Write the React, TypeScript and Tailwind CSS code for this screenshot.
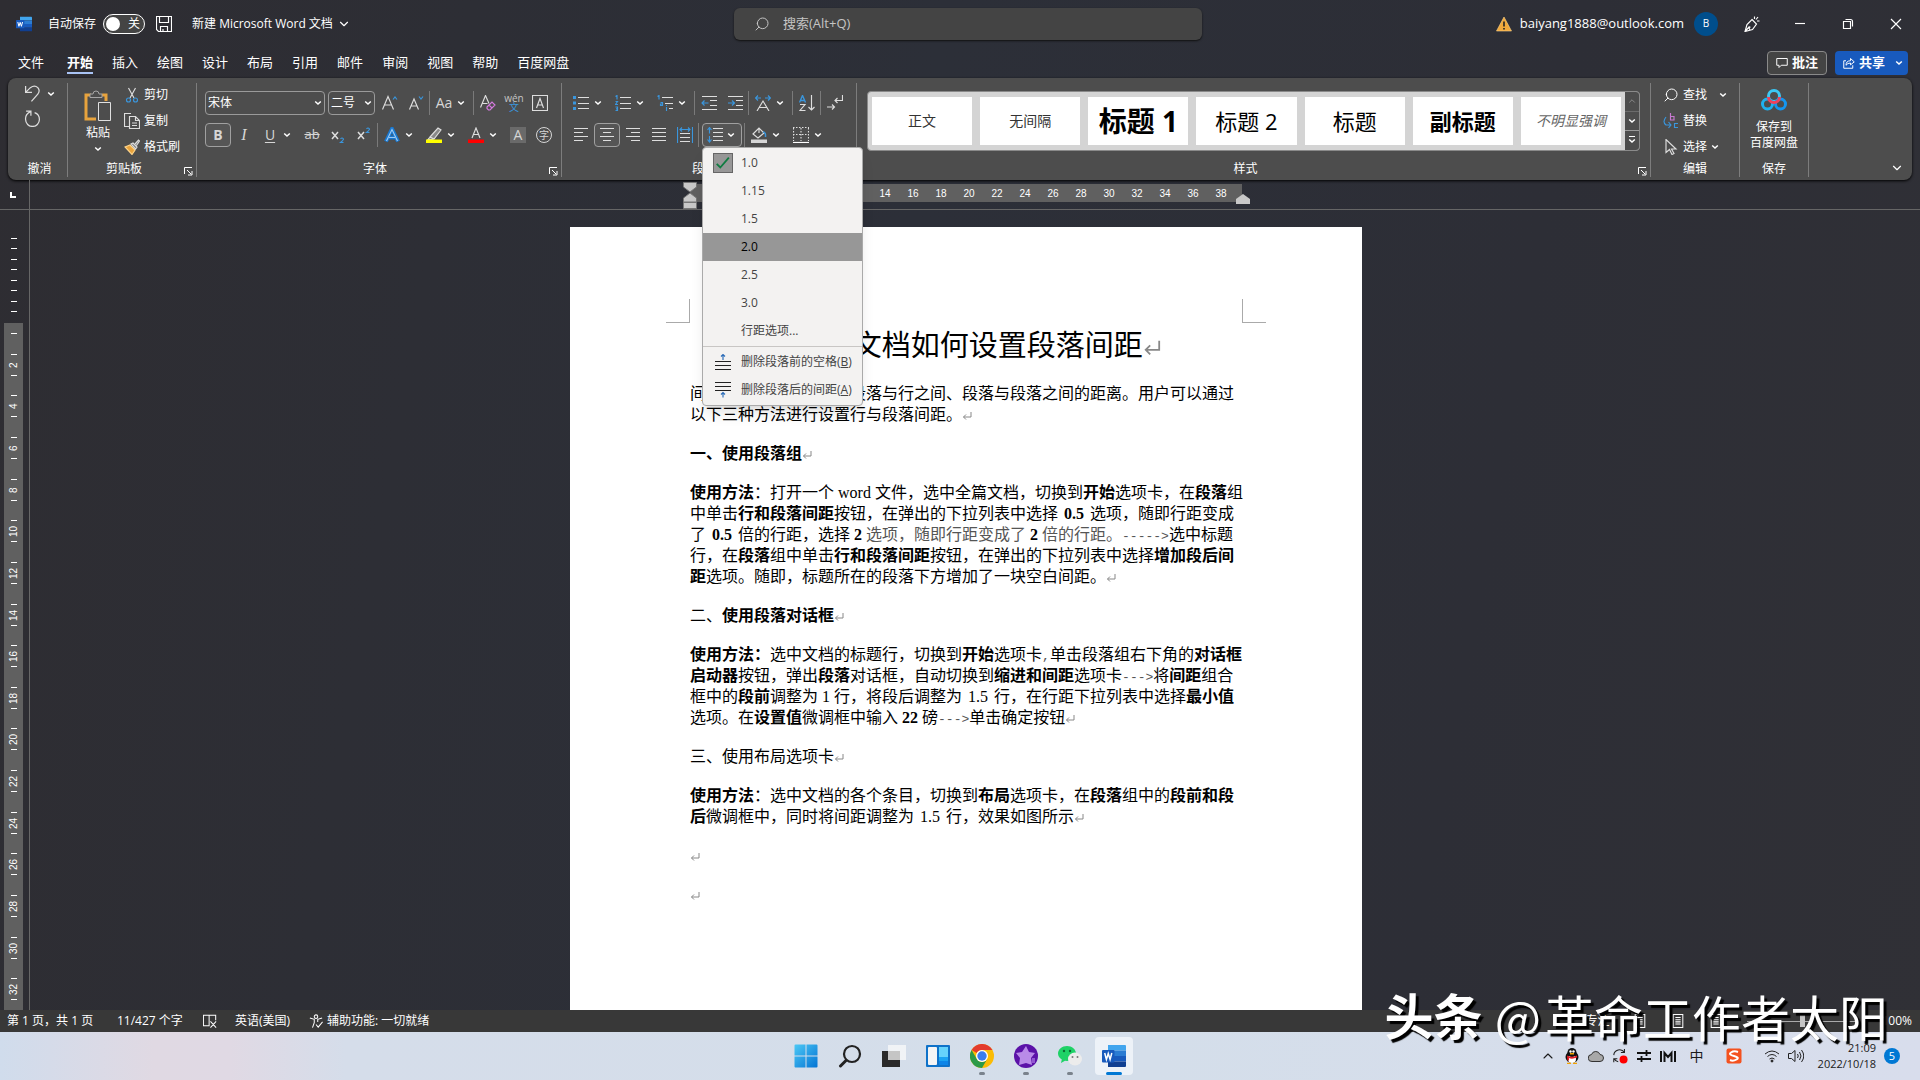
import type { ReactNode } from "react";
import { Search, ChevronDown, ChevronUp } from "lucide-react";

const TABS = ["文件", "开始", "插入", "绘图", "设计", "布局", "引用", "邮件", "审阅", "视图", "帮助", "百度网盘"];

const STYLES = [
  { name: "正文", cls: "text-sm text-[#333]" },
  { name: "无间隔", cls: "text-sm text-[#333]" },
  { name: "标题 1", cls: "text-[28px] font-bold text-black" },
  { name: "标题 2", cls: "text-[22px] text-black" },
  { name: "标题", cls: "text-[22px] text-black" },
  { name: "副标题", cls: "text-[22px] font-bold text-black" },
  { name: "不明显强调", cls: "text-sm italic text-[#666]" },
];

const SPACINGS = ["1.0", "1.15", "1.5", "2.0", "2.5", "3.0", "行距选项..."];

// * toggles bold, ~ toggles the lighter ink
const PARAGRAPHS = [
  ["间距就是指文档中文字段落与行之间、段落与段落之间的距离。用户可以通过", "以下三种方法进行设置行与段落间距。"],
  ["*一、使用段落组*"],
  [
    "*使用方法*：打开一个word文件，选中全篇文档，切换到*开始*选项卡，在*段落*组",
    "中单击*行和段落间距*按钮，在弹出的下拉列表中选择*0.5*选项，随即行距变成",
    "了*0.5*倍的行距，选择*2*~选项，随即行距变成了~*2*~倍的行距。~----->选中标题",
    "行，在*段落*组中单击*行和段落间距*按钮，在弹出的下拉列表中选择*增加段后间*",
    "*距*选项。随即，标题所在的段落下方增加了一块空白间距。",
  ],
  ["二、*使用段落对话框*"],
  [
    "*使用方法：*选中文档的标题行，切换到*开始*选项卡,单击段落组右下角的*对话框*",
    "*启动器*按钮，弹出*段落*对话框，自动切换到*缩进和间距*选项卡--->将*间距*组合",
    "框中的*段前*调整为1行，将段后调整为1.5行，在行距下拉列表中选择*最小值*",
    "选项。在*设置值*微调框中输入*22*磅--->单击确定按钮",
  ],
  ["三、使用布局选项卡"],
  [
    "*使用方法*：选中文档的各个条目，切换到*布局*选项卡，在*段落*组中的*段前和段*",
    "*后*微调框中，同时将间距调整为1.5行，效果如图所示",
  ],
  [""],
  [""],
];

function Rich({ text }: { text: string }) {
  let bold = false;
  let light = false;
  const out: ReactNode[] = [];
  text.split(/([*~]|[0-9A-Za-z.]+|[->,]+)/).forEach((part, i) => {
    if (part === "*") bold = !bold;
    else if (part === "~") light = !light;
    else if (part) {
      const word = /^[0-9A-Za-z.]+$/.test(part);
      const sign = /^[->,]+$/.test(part);
      const pad = part.includes(".") ? "px-1.5" : "px-1";
      out.push(
        <span
          key={i}
          className={`${bold ? "font-bold" : ""} ${light || sign ? "text-[#555]" : ""} ${
            sign ? "font-['Liberation_Mono',monospace] text-[13px]" : ""
          } ${word ? `font-['Liberation_Serif',serif] ${pad}` : ""}`}
        >
          {part}
        </span>
      );
    }
  });
  return <>{out}</>;
}

function ReturnMark({ large }: { large?: boolean }) {
  return (
    <svg
      viewBox="0 0 10 10"
      className={`inline ${large ? "size-[18px]" : "size-[10px]"}`}
      fill="none"
      stroke="#888"
    >
      <path d="M9 1v5H1.5M4 3.5 1.5 6 4 8.5" />
    </svg>
  );
}

/* ---------- small building blocks ---------- */

function Ico({ children, className = "size-4" }: { children: ReactNode; className?: string }) {
  return (
    <svg viewBox="0 0 16 16" className={`shrink-0 ${className}`} fill="none" stroke="#dedede" strokeWidth="1.15">
      {children}
    </svg>
  );
}

function Chev() {
  return (
    <svg viewBox="0 0 8 8" className="size-2 shrink-0" fill="none" stroke="#fff" strokeWidth="1.5">
      <path d="M1.2 2.500 4 5l2.800-2.500" />
    </svg>
  );
}

function Tool({ label, on, children }: { label: string; on?: boolean; children: ReactNode }) {
  return (
    <button
      aria-label={label}
      className={`flex h-6 w-[26px] shrink-0 items-center justify-center rounded ${
        on ? "border border-[#a0a0a0] bg-[#555]" : ""
      }`}
    >
      {children}
    </button>
  );
}

function Split({ label, children }: { label: string; children: ReactNode }) {
  return (
    <button aria-label={label} className="flex h-6 w-[42px] shrink-0 items-center">
      <span className="flex w-[26px] justify-center">{children}</span>
      <Chev />
    </button>
  );
}

function Sep() {
  return <span className="mr-px h-6 w-px shrink-0 bg-[#7a7a7a]" />;
}

function Combo({ label, value, className }: { label: string; value: string; className: string }) {
  return (
    <span className={`grid items-center rounded border border-[#9a9a9a] ${className}`}>
      <select
        aria-label={label}
        className="col-start-1 row-start-1 h-[22px] w-full appearance-none bg-transparent pl-0.5 text-xs text-white outline-none"
      >
        <option>{value}</option>
      </select>
      <span className="pointer-events-none col-start-1 row-start-1 mr-0.5 justify-self-end">
        <Chev />
      </span>
    </span>
  );
}

function Group({
  title,
  className,
  launcher,
  children,
}: {
  title: string;
  className: string;
  launcher?: boolean;
  children: ReactNode;
}) {
  return (
    <section aria-label={title} className={`flex flex-col border-r border-[#7d7d7d] ${className}`}>
      <div className="min-h-0 flex-1">{children}</div>
      <div className="flex h-4 items-center text-xs leading-4">
        <span className="flex-1 text-center">{title}</span>
        {launcher && (
          <button aria-label={`${title}设置`} className="flex w-4 justify-center pt-1">
            <svg viewBox="0 0 9 9" className="size-[9px]" fill="none" stroke="#fff">
              <path d="M.5 7V.5H8M3 3l4 4M8 4v4H4" />
            </svg>
          </button>
        )}
      </div>
    </section>
  );
}

function WordLogo({ className }: { className: string }) {
  return (
    <svg viewBox="0 0 24 24" className={className}>
      <path d="M6 1h17a1 1 0 0 1 1 1v4.5H6z" fill="#41a5ee" />
      <path d="M6 6.500h18V12H6z" fill="#2b7cd3" />
      <path d="M6 12h18v5.500H6z" fill="#185abd" />
      <path d="M6 17.500h18V22a1 1 0 0 1-1 1H6z" fill="#103f91" />
      <rect y="6" width="12.500" height="12.500" rx="1" fill="#185abd" />
      <path d="m2.700 9 1.700 6.500L6.250 9.500l1.850 6L9.800 9" fill="none" stroke="#fff" strokeWidth="1.500" />
    </svg>
  );
}

/* ---------- title bar and tabs ---------- */

function TitleBar() {
  return (
    <header className="flex h-12 items-center text-xs">
      <div className="flex flex-1 items-center pl-4">
        <WordLogo className="size-4" />
        <label className="ml-4 flex items-center gap-[7px]">
          自动保存
          <input type="checkbox" role="switch" className="sr-only" />
          <span className="flex h-5 w-[42px] items-center justify-between rounded-full border border-white bg-[#444] pr-1 pl-0.5">
            <span className="size-[14px] rounded-full bg-white" />关
          </span>
        </label>
        <button aria-label="保存" className="ml-[11px]">
          <Ico>
            <path d="M.5.5h15v15h-13l-2-2zM3.500.5v6h9v-6M4.500 15.500v-5h7v5M7 13v2.500" stroke="#fff" />
          </Ico>
        </button>
        <button className="ml-5 flex items-center gap-1">
          新建 Microsoft Word 文档
          <ChevronDown className="size-3.5" />
        </button>
      </div>
      <label className="flex h-8 w-[468px] items-center gap-[13px] rounded-md bg-[#444] px-5 text-[#c4c4c4] shadow-[0_1px_2px_#111]">
        <Search className="size-4 shrink-0 -scale-x-100" strokeWidth={1.5} />
        <input
          aria-label="搜索"
          placeholder="搜索(Alt+Q)"
          className="w-full bg-transparent text-[13px] outline-none placeholder:text-[#c4c4c4]"
        />
      </label>
      <div className="flex flex-1 items-center justify-end">
        <svg viewBox="0 0 16 16" className="size-4">
          <path d="M8 1 15.500 15H.5z" fill="#f2a93b" stroke="#ffd58a" strokeWidth=".6" />
          <path d="M8 5.500v5M8 12v1.500" stroke="#222" strokeWidth="1.600" />
        </svg>
        <span className="ml-2 text-[13px]">baiyang1888@outlook.com</span>
        <span className="ml-2.5 flex size-6 items-center justify-center rounded-full bg-[#004e8c] text-[10px]">
          B
        </span>
        <button aria-label="即将推出的功能" className="ml-2.5 flex w-12 justify-center">
          <Ico>
            <path d="M8 3.500 12.500 8 8.500 13.500 1 15.500 3 8.500zM1 15.500 5.500 10.500M6.500 11a1.500 1.500 0 1 0 .5 3M10.500.5v2.500M14 1l-2 2.500M15.500 5h-2.500" stroke="#fff" />
          </Ico>
        </button>
        <button aria-label="最小化" className="flex w-12 justify-center">
          <Ico>
            <path d="M3 7.500h10" stroke="#fff" />
          </Ico>
        </button>
        <button aria-label="还原" className="flex w-12 justify-center">
          <Ico>
            <path d="M5.500 3.500h5q2 0 2 2v5M3.500 5.500h7v7h-7z" stroke="#fff" />
          </Ico>
        </button>
        <button aria-label="关闭" className="flex w-12 justify-center">
          <Ico>
            <path d="m3 3 10 10M13 3 3 13" stroke="#fff" />
          </Ico>
        </button>
      </div>
    </header>
  );
}

function TabRow() {
  return (
    <nav className="flex h-[30px] items-center pr-3 pl-[18px] text-[13px]">
      <div className="flex flex-1 gap-[19px]">
        {TABS.map((t, i) => (
          <button
            key={t}
            className={`border-b-2 leading-5 ${i === 0 ? "mr-1" : ""} ${
              i === 1 ? "border-[#a9c3f5] font-bold" : "border-transparent"
            }`}
          >
            {t}
          </button>
        ))}
      </div>
      <button className="mr-2 flex h-6 w-[60px] items-center justify-center gap-1 rounded border border-[#8a8a8a] bg-[#444] font-bold">
        <Ico className="size-3">
          <path d="M1 2h14v9H7l-3 3v-3H1z" stroke="#fff" strokeWidth="1.300" />
        </Ico>
        批注
      </button>
      <button className="flex h-6 w-[73px] items-center gap-1 rounded bg-[#185abd] pl-2 font-bold">
        <Ico className="size-3">
          <path d="M4 5H1v10h12v-4M10 2l5 4.500-5 4V8Q6 8 4 11q0-6 6-6z" stroke="#fff" strokeWidth="1.300" />
        </Ico>
        共享
        <span className="ml-1.5">
          <Chev />
        </span>
      </button>
    </nav>
  );
}

/* ---------- ribbon ---------- */

function ClipboardGroup() {
  return (
    <Group title="剪贴板" className="w-[129px]" launcher>
      <div className="flex pt-1 pl-3.5">
        <button className="flex w-8 flex-col items-center gap-1 pt-0.5 text-xs leading-4">
          <svg viewBox="0 0 28 32" className="h-8 w-7" fill="none">
            <path d="M7 6H2v24h10M18 6h4v6" stroke="#e8a33d" strokeWidth="3" />
            <path d="M6 8.500V5h3q0-3 3-3t3 3h3v3.500z" fill="#4d4d4d" stroke="#a6a6a6" />
            <path d="M14.500 13.500h12v18h-12z" fill="#4d4d4d" stroke="#e0e0e0" />
          </svg>
          粘贴
          <Chev />
        </button>
        <div className="ml-2.5 flex flex-col gap-2.5 text-xs leading-4">
          <button className="flex items-center gap-1">
            <Ico>
              <path d="M4.500 1 10 11M11.500 1 6 11" />
              <circle cx="4.500" cy="13" r="2" stroke="#3a96dd" />
              <circle cx="11.500" cy="13" r="2" stroke="#3a96dd" />
            </Ico>
            剪切
          </button>
          <button className="flex items-center gap-1">
            <Ico>
              <path d="M5 13.500H.5V.5H7M5.500 3.500h6l4 4v8h-10zM11.500 3.500v4h4M8 10h5M8 12.500h5" />
            </Ico>
            复制
          </button>
          <button className="flex items-center gap-1">
            <Ico>
              <path d="m1 8 5-2 5 5-3 4.500z" fill="#e8a33d" stroke="#ffd58a" />
              <path d="m7 5 2-1 4 4-1.500 2zM11 5l3.500-4 1 1L12.500 6.500" fill="#777" />
            </Ico>
            格式刷
          </button>
        </div>
      </div>
    </Group>
  );
}

function FontGroup() {
  return (
    <Group title="字体" className="w-[365px] pl-2" launcher>
      <div className="flex flex-col gap-2 pt-2">
        <div className="flex">
          <Combo label="字体" value="宋体" className="mr-[3px] w-[120px]" />
          <Combo label="字号" value="二号" className="mr-0.5 w-[47px]" />
          <Tool label="增大字号">
            <Ico>
              <path d="M.5 14.500 6 1.500l5.500 13M2.500 10h7" />
              <path d="m11 4.500 2-2.500 2 2.500" stroke="#3a96dd" />
            </Ico>
          </Tool>
          <Tool label="减小字号">
            <Ico>
              <path d="M1.500 14.500 6 4l4.500 10.500M3 11h6" />
              <path d="m11 1.500 2 2.500 2-2.500" stroke="#3a96dd" />
            </Ico>
          </Tool>
          <Sep />
          <Split label="更改大小写">
            <span className="text-sm text-[#d6d6d6]">Aa</span>
          </Split>
          <Sep />
          <Tool label="清除格式">
            <Ico>
              <path d="M.5 12.500 5.500.5l3.500 8M2.500 8.500h5" />
              <path d="m7 12 5-5 3 3-5 5H8.500L7 13.500zM9 10l3 3" stroke="#d67ae0" />
            </Ico>
          </Tool>
          <Tool label="拼音指南">
            <span className="flex flex-col items-center text-[10px] leading-[9px] text-[#c4c4c4]">
              wén<span className="text-[#3a96dd]">文</span>
            </span>
          </Tool>
          <Tool label="字符边框">
            <Ico>
              <path d="M.5.5h15v15H.5zM4.500 13 8 3.500 11.500 13M5.500 10h5" />
            </Ico>
          </Tool>
        </div>
        <div className="flex text-base text-[#d6d6d6]">
          <Tool label="加粗" on>
            <b className="text-sm">B</b>
          </Tool>
          <Tool label="倾斜">
            <i className="font-['Liberation_Serif',serif]">I</i>
          </Tool>
          <Split label="下划线">
            <span className="text-sm underline underline-offset-2">U</span>
          </Split>
          <Tool label="删除线">
            <span className="text-[13px] line-through">ab</span>
          </Tool>
          <Tool label="下标">
            <Ico>
              <path d="m2 5 6 7M8 5l-6 7" strokeWidth="1.500" />
              <path d="M10.500 12q1.500-2 3 0 0 1-3 3.500h3" stroke="#3a96dd" />
            </Ico>
          </Tool>
          <Tool label="上标">
            <Ico>
              <path d="m2 5 6 7M8 5l-6 7" strokeWidth="1.500" />
              <path d="M10.500 2q1.500-2 3 0 0 1-3 3.500h3" stroke="#3a96dd" />
            </Ico>
          </Tool>
          <Sep />
          <Split label="文本效果">
            <Ico>
              <path d="M2 14.500 8 2l6 12.500M5 10.500h6" stroke="#1a78d0" strokeWidth="4" />
              <path d="M2.500 14 8 2.500 13.500 14M5 10.500h6" stroke="#9ccbf5" />
            </Ico>
          </Split>
          <Split label="突出显示">
            <Ico>
              <path d="m4 10 8-9 3 2-7 9zM4 10l-2 2.500h4l2-.5" fill="#888" />
              <path d="M0 12.500h16V16H0z" fill="#ffff00" stroke="none" />
            </Ico>
          </Split>
          <Split label="字体颜色">
            <Ico>
              <path d="M4 11 8 1l4 10M5.500 7.500h5" />
              <path d="M0 12.500h16V16H0z" fill="#ff0000" stroke="none" />
            </Ico>
          </Split>
          <Tool label="字符底纹">
            <span className="flex size-4 items-center justify-center bg-[#6a6a6a] text-sm">A</span>
          </Tool>
          <Tool label="带圈字符">
            <span className="flex size-4 items-center justify-center rounded-full border border-[#d6d6d6] text-[10px]">
              字
            </span>
          </Tool>
        </div>
      </div>
    </Group>
  );
}

function SpacingMenu() {
  return (
    <div
      role="menu"
      className="absolute top-full left-0 z-20 w-[161px] rounded border border-[#aaa] bg-[#f3f2f1] py-px text-xs text-[#444] shadow-lg"
    >
      {SPACINGS.map((s) => (
        <button
          key={s}
          role="menuitem"
          className={`flex h-7 w-full items-center pl-2.5 ${s === "2.0" ? "bg-[#979797] text-black" : ""}`}
        >
          <span className="mr-2 flex w-5 justify-center">
            {s === "1.0" && (
              <svg viewBox="0 0 20 20" className="size-5 border border-[#666] bg-[#979797]">
                <path d="m3 11 4 4 9.500-11" fill="none" stroke="#107c41" strokeWidth="2" />
              </svg>
            )}
          </span>
          {s}
        </button>
      ))}
      <hr className="my-px border-[#c8c6c4]" />
      <button role="menuitem" className="flex h-7 w-full items-center pl-2.5 whitespace-nowrap">
        <Ico className="mr-2.5 ml-0.5 size-4">
          <path d="M0 7.500h16M0 11.500h16M0 15.500h16" stroke="#222" />
          <path d="M8 6V.5M6 2.500l2-2 2 2" stroke="#2b6cb8" />
        </Ico>
        删除段落前的空格(<u>B</u>)
      </button>
      <button role="menuitem" className="flex h-7 w-full items-center pl-2.5 whitespace-nowrap">
        <Ico className="mr-2.5 ml-0.5 size-4">
          <path d="M0 .5h16M0 4.500h16M0 8.500h16" stroke="#222" />
          <path d="M8 10v5.500M6 12.500l2-2 2 2" stroke="#2b6cb8" />
        </Ico>
        删除段落后的间距(<u>A</u>)
      </button>
    </div>
  );
}

function ParagraphGroup() {
  return (
    <Group title="段落" className="w-[295px] pl-1.5" launcher>
      <div className="flex flex-col gap-2 pt-2">
        <div className="flex">
          <Split label="项目符号">
            <Ico>
              <path d="M0 1h3v3H0zM0 6.500h3v3H0zM0 12h3v3H0z" fill="#3a96dd" stroke="none" />
              <path d="M5 2.500h11M5 8.500h11M5 13.500h11" />
            </Ico>
          </Split>
          <Split label="编号">
            <Ico>
              <path d="M.5 1.500 2 .5v4M.5 6.500H2.500l-2 3h2.500M.5 12h2v3.500h-2M1 13.800h1.500" stroke="#3a96dd" />
              <path d="M5 2.500h11M5 8.500h11M5 13.500h11" />
            </Ico>
          </Split>
          <Split label="多级列表">
            <Ico>
              <path d="M.5 1.500 2 .5v4M3.500 7.500h2v3h-2v-1.500h2M9.500 12v4M9.500 10v1" stroke="#3a96dd" />
              <path d="M5 2.500h11M8 8.500h8M12 13.500h4" />
            </Ico>
          </Split>
          <Sep />
          <Tool label="减少缩进量">
            <Ico>
              <path d="M1 1.500h15M9 5.500h7M9 10.500h7M1 14.500h15" />
              <path d="M7.500 8H1M3.500 5.500 1 8l2.500 2.500" stroke="#3a96dd" />
            </Ico>
          </Tool>
          <Tool label="增加缩进量">
            <Ico>
              <path d="M1 1.500h15M9 5.500h7M9 10.500h7M1 14.500h15" />
              <path d="M1 8h6.500M5 5.500 7.500 8 5 10.500" stroke="#3a96dd" />
            </Ico>
          </Tool>
          <Sep />
          <Split label="中文版式">
            <Ico>
              <path d="M2 16 8 6l6 10M4 12.500h8" />
              <path d="M6 3H.5M3 .5.500 3 3 5.500M10 3h5.500M13 .5 15.500 3 13 5.500" stroke="#3a96dd" />
            </Ico>
          </Split>
          <Sep />
          <Tool label="排序">
            <Ico>
              <path d="M.5 7.500 3.500.5l3 7M1.500 5.500h4" stroke="#3a96dd" strokeWidth="1.400" />
              <path d="M1 9.500h5l-5 6h5.500M12.500 0v15M9.500 12l3 3 3-3" />
            </Ico>
          </Tool>
          <Sep />
          <Tool label="显示编辑标记">
            <Ico>
              <path d="M15.500 0v5.500H8M10.500 3 8 5.500 10.500 8M0 12h7.500M5 9.500 7.500 12 5 14.500" />
            </Ico>
          </Tool>
        </div>
        <div className="flex">
          <Tool label="左对齐">
            <Ico>
              <path d="M1 1.500h14M1 5.500h9M1 9.500h14M1 13.500h9" />
            </Ico>
          </Tool>
          <Tool label="居中" on>
            <Ico>
              <path d="M1 1.500h14M4 5.500h8M1 9.500h14M4 13.500h8" />
            </Ico>
          </Tool>
          <Tool label="右对齐">
            <Ico>
              <path d="M1 1.500h14M6 5.500h9M1 9.500h14M6 13.500h9" />
            </Ico>
          </Tool>
          <Tool label="两端对齐">
            <Ico>
              <path d="M1 1.500h14M1 5.500h14M1 9.500h14M1 13.500h14" />
            </Ico>
          </Tool>
          <Tool label="分散对齐">
            <Ico>
              <path d="M3 6.500h10M3 10.500h10M3 14.500h10" />
              <path d="M.5 0v16M15.500 0v16M2.500 2.500h11M5 .5l-2 2 2 2M11 .5l2 2-2 2" stroke="#3a96dd" />
            </Ico>
          </Tool>
          <Sep />
          <div className="relative mr-0.5 ml-0.5">
            <button
              aria-label="行和段落间距"
              className="flex h-6 w-10 items-center gap-1 rounded border border-[#a0a0a0] bg-[#555] pl-1"
            >
              <Ico>
                <path d="M6 1.500h10M6 5.500h10M6 9.500h10M6 13.500h10" />
                <path d="M2.500.5v6M.5 3l2-2.500 2 2.500M2.500 9v6M.5 12.500l2 2.500 2-2.500" stroke="#3a96dd" />
              </Ico>
              <Chev />
            </button>
            <SpacingMenu />
          </div>
          <Sep />
          <Split label="底纹">
            <Ico>
              <path d="m2 7 6-6 5 5-6 5zM8 1v5" />
              <path d="M12 5q3 0 2.500 5" stroke="#3a96dd" strokeWidth="1.500" />
              <path d="M0 12.500h16V16H0z" fill="#d6d6d6" stroke="none" />
            </Ico>
          </Split>
          <Split label="边框">
            <Ico>
              <path d="M.5 1v13M15.500 1v13M8 1v13M0 .5h16M0 7.500h16" strokeDasharray="1.500 1.500" />
              <path d="M0 15.500h16" stroke="#fff" />
            </Ico>
          </Split>
        </div>
      </div>
    </Group>
  );
}

function StylesGroup() {
  return (
    <Group title="样式" className="min-w-0 flex-1" launcher>
      <div className="mx-2.5 mt-2 flex h-[60px] overflow-hidden rounded border border-[#8a8a8a] bg-[#d4d4d4]">
        <div className="flex min-w-0 flex-1 gap-2 px-1 py-[5px]">
          {STYLES.map((s) => (
            <button key={s.name} className={`min-w-0 flex-1 overflow-hidden bg-white whitespace-nowrap ${s.cls}`}>
              {s.name}
            </button>
          ))}
        </div>
        <div className="flex w-[14px] flex-col divide-y divide-[#9a9a9a] bg-[#4d4d4d]">
          <button aria-label="上一行" className="flex flex-1 items-center justify-center opacity-40">
            <ChevronUp className="size-2.5" />
          </button>
          <button aria-label="下一行" className="flex flex-1 items-center justify-center">
            <Chev />
          </button>
          <button aria-label="其他" className="flex flex-1 flex-col items-center justify-center">
            <span className="h-px w-1.5 bg-white" />
            <Chev />
          </button>
        </div>
      </div>
    </Group>
  );
}

function Ribbon() {
  return (
    <div className="mx-2 flex h-[102px] rounded-lg bg-[#4d4d4d] pt-[5px] pb-[3px] shadow-[0_1px_3px_#000]">
      <Group title="撤消" className="w-[60px] pl-1">
        <div className="flex flex-col gap-2 pt-0.5 pl-3">
          <button aria-label="撤消" className="flex items-center gap-1.5">
            <Ico className="size-[17px]">
              <path d="M1.500 1v6h6M1.500 7 6 2.500q4-3 7 0 2.500 3 0 6L7 15.500" />
            </Ico>
            <Chev />
          </button>
          <button aria-label="重复">
            <Ico className="size-[17px]">
              <path d="M2 1h4.500v4.500M6 1.500Q1 4 1.500 9a6.500 6.500 0 0 0 13 0q0-5-4.500-6.500" />
            </Ico>
          </button>
        </div>
      </Group>
      <ClipboardGroup />
      <FontGroup />
      <ParagraphGroup />
      <StylesGroup />
      <Group title="编辑" className="w-[89px]">
        <div className="flex flex-col gap-2.5 pt-1 pl-3 text-xs leading-4">
          <button className="flex items-center gap-1">
            <Search className="size-4 -scale-x-100" strokeWidth={1.5} />
            查找
            <span className="ml-2">
              <Chev />
            </span>
          </button>
          <button className="flex items-center gap-1">
            <Ico>
              <path d="M7.500 0v7h3.500V3.500H7.500" stroke="#c77ad0" />
              <path d="M15 10.500h-3.500v4H15M3 4Q-1 9 3 12h5M5.500 9 8 12l-2.500 3" stroke="#3a96dd" />
            </Ico>
            替换
          </button>
          <button className="flex items-center gap-1">
            <Ico>
              <path d="M3 .5v13l3.500-3L9 15.500l2-1-2.500-4.500H13z" />
            </Ico>
            选择
            <Chev />
          </button>
        </div>
      </Group>
      <Group title="保存" className="w-[69px]">
        <button className="flex w-full flex-col items-center pt-1 text-xs leading-4">
          <svg viewBox="0 0 26 24" className="h-6 w-[26px]" fill="none" strokeWidth="3">
            <circle cx="13" cy="9" r="5.500" stroke="#3cc8f5" />
            <circle cx="6.500" cy="17" r="5" stroke="#1fb1f0" />
            <circle cx="19.500" cy="17" r="5" stroke="#1496f0" />
            <path d="M7.500 10a5.500 5.500 0 0 0 11 0" stroke="#f0405c" />
          </svg>
          <span className="mt-2">保存到</span>
          <span>百度网盘</span>
        </button>
      </Group>
      <div className="flex w-[103px] items-end justify-end pr-2 pb-0.5">
        <button aria-label="功能区显示选项">
          <ChevronDown className="size-[14px]" />
        </button>
      </div>
    </div>
  );
}

/* ---------- rulers and document ---------- */

function HorizontalRuler() {
  return (
    <div className="flex h-[30px] border-b border-[#666]">
      <div className="flex w-[30px] items-center justify-center border-r border-[#666] pr-1">
        <span className="size-1.5 border-b-2 border-l-2 border-white" />
      </div>
      <div className="flex flex-1 justify-center pt-1 pr-[18px]">
        <div className="relative flex h-[18px] w-[552px] bg-[#606060] pl-[13px] font-['Liberation_Sans',sans-serif] text-[10px] leading-5">
          {Array.from({ length: 19 }, (_, i) => (
            <span key={i} className="w-7 text-center">
              {(i + 1) * 2}
            </span>
          ))}
          <svg viewBox="0 0 14 27" className="absolute -top-0.5 -left-[7px] h-[27px] w-[14px]" fill="#c8c8c8" stroke="#777">
            <path d="M.5.500h13V5L7 10 .5 5zM.5 20v-4L7 11l6.500 5v4zM.5 20.500h13v6H.5z" />
          </svg>
          <svg viewBox="0 0 14 10" className="absolute top-2.5 -right-2 h-2.5 w-[14px]" fill="#c8c8c8">
            <path d="M0 10V5l7-5 7 5v5z" />
          </svg>
        </div>
      </div>
    </div>
  );
}

function VerticalRuler() {
  return (
    <div className="flex w-[30px] shrink-0 flex-col border-r border-[#666] pr-1.5 pl-1">
      <div className="flex h-[113px] shrink-0 flex-col items-center justify-between pt-7 pb-[11px]">
        {Array.from({ length: 8 }, (_, i) => (
          <span key={i} className="h-px w-1.5 bg-white" />
        ))}
      </div>
      <div className="flex min-h-0 flex-1 flex-col bg-[#606060]">
        <div className="flex h-[21px] shrink-0 items-center justify-center">
          <span className="h-px w-1.5 bg-white" />
        </div>
        {Array.from({ length: 16 }, (_, i) => (
          <div key={i} className="flex min-h-0 flex-1 flex-col items-center justify-center gap-1">
            <span className="h-px w-1.5 shrink-0 bg-white" />
            <span className="flex h-3 rotate-180 items-center justify-center font-['Liberation_Sans',sans-serif] text-[10px] leading-3 [writing-mode:vertical-rl]">
              {(i + 1) * 2}
            </span>
            <span className="h-px w-1.5 shrink-0 bg-white" />
          </div>
        ))}
      </div>
    </div>
  );
}

function Page() {
  return (
    <article className="w-[792px] shrink-0 bg-white px-[96px] pt-[72px] text-black">
      <div className="flex justify-between">
        <span className="h-6 w-6 border-r border-b border-[#aaa]" />
        <span className="h-6 w-6 border-b border-l border-[#aaa]" />
      </div>
      <div className="flex flex-col gap-[18px] px-6 text-base leading-[21px]">
        <h1 className="h-[42px] text-center text-[29px] leading-[44px] whitespace-nowrap">
          Word 文档如何设置段落间距
          <ReturnMark large />
        </h1>
        {PARAGRAPHS.map((lines, i) => (
          <p key={i}>
            {lines.map((line, j) => (
              <span key={j} className="block h-[21px] whitespace-nowrap">
                <Rich text={line} />
                {j === lines.length - 1 && <ReturnMark />}
              </span>
            ))}
          </p>
        ))}
      </div>
    </article>
  );
}

function StatusBar() {
  return (
    <footer className="flex h-[22px] shrink-0 items-center bg-[#383838] pr-2 pl-[7px] text-xs">
      <span className="w-[110px]">第 1 页，共 1 页</span>
      <span className="w-[86px]">11/427 个字</span>
      <button aria-label="校对" className="mr-[18px]">
        <Ico className="size-[14px]">
          <path d="M7 13.500H.5V1.500H7zM7 1.500h7.500V7M8.500 8.500l6.500 7M15 8.500l-6.500 7" stroke="#fff" />
        </Ico>
      </button>
      <span className="w-[74px]">英语(美国)</span>
      <button className="flex items-center gap-1">
        <Ico className="size-[14px]">
          <path d="M1 4.500 6 6v4l-2 5.500M15 4.500 10 6v3M8 12l2.500 3L15.500 9" stroke="#fff" />
          <circle cx="8" cy="3" r="2" stroke="#fff" />
        </Ico>
        辅助功能: 一切就绪
      </button>
      <div className="ml-auto flex items-center gap-6">
        <span>专注</span>
        {["阅读视图", "页面视图", "Web 版式视图"].map((v) => (
          <button key={v} aria-label={v}>
            <Ico className="size-[14px]">
              <path d="M2.500.5h11v15h-11zM5 4h6M5 6.500h6M5 9h6M5 11.500h6" stroke="#fff" />
            </Ico>
          </button>
        ))}
        <input
          type="range"
          aria-label="缩放"
          className="h-px w-[110px] appearance-none bg-[#aaa] [&::-webkit-slider-thumb]:h-3 [&::-webkit-slider-thumb]:w-[5px] [&::-webkit-slider-thumb]:appearance-none [&::-webkit-slider-thumb]:bg-[#c4c4c4]"
        />
        <span>100%</span>
      </div>
    </footer>
  );
}

/* ---------- taskbar ---------- */

const APPS = [
  {
    name: "开始",
    art: (
      <svg viewBox="0 0 24 24" className="size-6">
        <defs>
          <linearGradient id="win" x1="0" y1="0" x2="1" y2="1">
            <stop offset="0" stopColor="#4cc8f5" />
            <stop offset="1" stopColor="#0474d4" />
          </linearGradient>
        </defs>
        <path d="M.5 1.500a1 1 0 0 1 1-1h10v11H.5zM12.500.5h10a1 1 0 0 1 1 1v10h-11zM.5 12.500h11v11h-10a1 1 0 0 1-1-1zM12.500 12.500h11v10a1 1 0 0 1-1 1h-10z" fill="url(#win)" />
      </svg>
    ),
  },
  {
    name: "搜索",
    art: (
      <svg viewBox="0 0 24 24" className="size-6" fill="none" stroke="#222" strokeLinecap="round">
        <circle cx="14" cy="10" r="8" strokeWidth="2.200" />
        <path d="M8 16.500 2.500 22" strokeWidth="3" />
      </svg>
    ),
  },
  {
    name: "任务视图",
    art: (
      <svg viewBox="0 0 24 24" className="size-6">
        <path d="M0 7h18v16H0z" fill="#2a2a2a" />
        <path d="M6 1h18v15H6z" fill="#fafafa" opacity=".75" />
      </svg>
    ),
  },
  {
    name: "小组件",
    art: (
      <svg viewBox="0 0 24 24" className="size-6">
        <rect y="1" width="24" height="22" rx="1" fill="#0f72c9" />
        <rect x="2" y="3" width="9" height="18" rx="1" fill="#f5f5f5" />
        <path d="M13 3h9v10h-9z" fill="#66d3fb" />
        <path d="M13 13h9v4h-9z" fill="#1ba4f2" />
        <path d="M13 17h9v4h-9z" fill="#0d85e8" />
      </svg>
    ),
  },
  {
    name: "Chrome",
    art: (
      <svg viewBox="0 0 24 24" className="size-6">
        <circle cx="12" cy="12" r="12" fill="#fbbc05" />
        <path d="M1.600 6A12 12 0 0 1 22.400 6H12a6 6 0 0 0-5.200 3z" fill="#e33b2e" />
        <path d="M1.600 6A12 12 0 0 0 12 24l5.200-9a6 6 0 0 1-10.400 0z" fill="#2b9a48" />
        <circle cx="12" cy="12" r="6" fill="#fff" />
        <circle cx="12" cy="12" r="4.700" fill="#3b7ded" />
      </svg>
    ),
  },
  {
    name: "星愿",
    art: (
      <svg viewBox="0 0 24 24" className="size-6">
        <circle cx="12" cy="12" r="12" fill="#5b12a8" />
        <path d="m12 2 3 6 6 1-4 5 1 7-6-2-7 2 1-7-4-5 6-1z" fill="#b98be8" />
        <path d="M18 14h3v5h-3z" fill="#9257d0" />
      </svg>
    ),
  },
  {
    name: "微信",
    art: (
      <svg viewBox="0 0 24 24" className="size-6">
        <path d="M9 2c5 0 9 3.500 9 7.500S14 17 9 17l-2-.3L3 19l.8-3.500C1.500 14 0 12 0 9.500 0 5.500 4 2 9 2z" fill="#1fd267" />
        <circle cx="6" cy="7" r="1.200" fill="#0c6b33" />
        <circle cx="12" cy="7" r="1.200" fill="#0c6b33" />
        <ellipse cx="17" cy="15" rx="7" ry="6.500" fill="#ececec" />
        <circle cx="14.500" cy="13" r="1" fill="#777" />
        <circle cx="19.500" cy="13" r="1" fill="#777" />
      </svg>
    ),
  },
  { name: "Word", art: <WordLogo className="size-6" /> },
];

function Tray() {
  return (
    <div className="flex flex-1 items-center justify-end gap-2 pr-5 text-[#1a1a1a]">
      <ChevronUp className="size-4" strokeWidth={1.600} />
      <svg viewBox="0 0 16 16" className="size-4">
        <ellipse cx="8" cy="9" rx="6.500" ry="6" fill="#111" />
        <ellipse cx="8" cy="11" rx="4" ry="4" fill="#fff" />
        <circle cx="8" cy="4.500" r="4.500" fill="#111" />
        <circle cx="6.500" cy="3.500" r="1.200" fill="#fff" />
        <circle cx="9.500" cy="3.500" r="1.200" fill="#fff" />
        <path d="M3 7.500q5 2.500 10 0v2q-5 2-8 .5v2.500H3.500z" fill="#e81e25" />
        <path d="M3 15.500h4M9 15.500h4M6 5.800h4" stroke="#f5a300" strokeWidth="1.500" />
      </svg>
      <svg viewBox="0 0 16 16" className="size-4" fill="#a8a8a8" stroke="#333">
        <path d="M4 13.500a3.500 3.500 0 0 1-.5-7 4.500 4.500 0 0 1 8.500 0 3.500 3.500 0 0 1 0 7z" />
      </svg>
      <svg viewBox="0 0 18 18" className="size-4" fill="none" stroke="#222" strokeWidth="1.200">
        <path d="M2 8a6.500 6.500 0 0 1 12-3M14 1v4h-4M7 15.500A6.500 6.500 0 0 1 2.500 12M2 16v-4h4" />
        <circle cx="13" cy="13" r="4.500" fill="#f00" stroke="none" />
      </svg>
      <svg viewBox="0 0 16 16" className="size-4" stroke="#111" strokeWidth="1.800">
        <path d="M1 5h14M1 11h14M10.500 2v6M5.500 8v6" />
      </svg>
      <svg viewBox="0 0 16 16" className="size-4" fill="none" stroke="#111" strokeWidth="2">
        <path d="M1 3v11M4.500 14V5L8 9l3.500-4v9M15 3v11" />
      </svg>
      <span className="mx-1.5 w-4 text-sm leading-5">中</span>
      <svg viewBox="0 0 16 16" className="mr-2 ml-1.5 size-4">
        <rect x=".5" y=".5" width="15" height="15" rx="2" fill="#f4511e" />
        <path d="M12 4Q8 2.500 5 4.500T8 8t2.500 3.500T4 12" fill="none" stroke="#fff" strokeWidth="2" />
      </svg>
      <svg viewBox="0 0 16 16" className="ml-1.5 size-4" fill="none" stroke="#222">
        <path d="M1 6q7-6 14 0M3.500 8.500q4.500-4 9 0M5.500 11q2.500-2 5 0" />
        <circle cx="8" cy="13" r="1" fill="#222" />
      </svg>
      <svg viewBox="0 0 16 16" className="size-4" fill="none" stroke="#222">
        <path d="M.5 5.500h3l3.500-3v11l-3.500-3h-3zM9.500 6q1.500 2 0 4M11.500 4q3 4 0 8M13.500 2q4.500 6 0 12" />
      </svg>
      <time className="ml-1.5 text-right text-[11px] leading-4">
        21:09
        <br />
        2022/10/18
      </time>
      <span className="flex size-4 items-center justify-center rounded-full bg-[#0078d4] text-[11px] text-white">5</span>
    </div>
  );
}

function Taskbar() {
  return (
    <footer className="flex h-12 shrink-0 items-center bg-[linear-gradient(90deg,#d0dcec,#e0d9e3_8%,#e0d9e4_12%,#d5ddea_18%,#d4deea_60%,#d8ddec)]">
      <div className="flex-1 pl-5" />
      <div className="flex">
        {APPS.map((a, i) => (
          <button
            key={a.name}
            aria-label={a.name}
            className={`mx-[3px] flex h-[38px] w-[38px] flex-col items-center rounded pt-[7px] ${
              i === 7 ? "bg-[#edf2f8]" : ""
            }`}
          >
            {a.art}
            {i > 3 && (
              <span className={`mt-1 h-[3px] shrink-0 rounded-full ${i === 7 ? "w-4 bg-[#0078d4]" : "w-1.5 bg-[#7a828c]"}`} />
            )}
          </button>
        ))}
      </div>
      <Tray />
    </footer>
  );
}

export default function App() {
  return (
    <div className="relative flex h-screen w-full flex-col overflow-hidden bg-[linear-gradient(100deg,#2e2d32,#2c2f38_45%,#2d2e36_75%,#303036)] font-['Open_Sans','Noto_Sans_CJK_SC',sans-serif] text-white">
      <TitleBar />
      <TabRow />
      <Ribbon />
      <HorizontalRuler />
      <main className="flex min-h-0 flex-1">
        <VerticalRuler />
        <div className="flex min-w-0 flex-1 justify-center overflow-hidden pt-[17px] pr-[18px]">
          <Page />
        </div>
      </main>
      <StatusBar />
      <Taskbar />
      <div className="pointer-events-none absolute right-8 bottom-7 flex items-center gap-3 text-[49px] leading-[72px] whitespace-nowrap [text-shadow:3px_3px_1px_#000]">
        <b>头条</b>
        <span className="font-['Noto_Sans_CJK_SC',sans-serif]">
          <span className="mr-1">@</span>
          革命工作者太阳
        </span>
      </div>
    </div>
  );
}
